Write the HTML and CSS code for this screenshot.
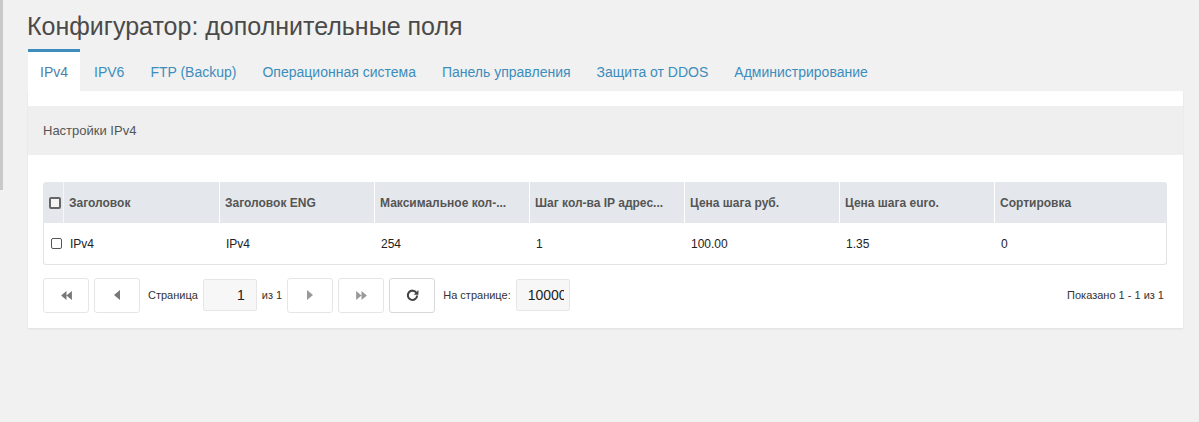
FILE: index.html
```html
<!DOCTYPE html>
<html lang="ru">
<head>
<meta charset="utf-8">
<title>Конфигуратор</title>
<link rel="stylesheet" href="styles.css">
</head>
<body>
<div class="layout">
  <div class="edge"></div>
  <main class="main">
    <h1 class="title">Конфигуратор: дополнительные поля</h1>
    <ul class="tabs">
      <li class="tab active">IPv4</li>
      <li class="tab">IPV6</li>
      <li class="tab">FTP (Backup)</li>
      <li class="tab">Операционная система</li>
      <li class="tab">Панель управления</li>
      <li class="tab">Защита от DDOS</li>
      <li class="tab">Администрирование</li>
    </ul>
    <section class="card">
      <div class="panel-head">Настройки IPv4</div>
      <div class="panel-body">
        <div class="grid">
          <div class="grid-row grid-head">
            <div class="cell cb"><span class="box box-head"></span></div>
            <div class="cell">Заголовок</div>
            <div class="cell">Заголовок ENG</div>
            <div class="cell">Максимальное кол-...</div>
            <div class="cell">Шаг кол-ва IP адрес...</div>
            <div class="cell">Цена шага руб.</div>
            <div class="cell">Цена шага euro.</div>
            <div class="cell last">Сортировка</div>
          </div>
          <div class="grid-row grid-body">
            <div class="cell cb"><span class="box"></span></div>
            <div class="cell">IPv4</div>
            <div class="cell">IPv4</div>
            <div class="cell">254</div>
            <div class="cell">1</div>
            <div class="cell">100.00</div>
            <div class="cell">1.35</div>
            <div class="cell last">0</div>
          </div>
        </div>
        <div class="pager">
          <button class="pbtn" aria-label="Первая">
            <svg width="11" height="9" viewBox="0 0 12 10"><path d="M6 0v10L0 5z M12 0v10L6 5z" fill="#777"/></svg>
          </button>
          <button class="pbtn" aria-label="Назад">
            <svg width="6" height="10" viewBox="0 0 6 10"><path d="M6 0v10L0 5z" fill="#777"/></svg>
          </button>
          <span class="plabel">Страница</span>
          <span class="pinput page-num">1</span>
          <span class="plabel of">из 1</span>
          <button class="pbtn" aria-label="Вперёд">
            <svg width="6" height="10" viewBox="0 0 6 10"><path d="M0 0v10L6 5z" fill="#999"/></svg>
          </button>
          <button class="pbtn" aria-label="Последняя">
            <svg width="11" height="9" viewBox="0 0 12 10"><path d="M0 0v10L6 5z M6 0v10L12 5z" fill="#999"/></svg>
          </button>
          <button class="pbtn refresh" aria-label="Обновить">
            <svg width="13" height="13" viewBox="0 0 14 14"><path d="M11.3 4.2A5 5 0 1 0 12 7" fill="none" stroke="#444" stroke-width="2.2"/><path d="M13.4 1.2v5h-5z" fill="#444"/></svg>
          </button>
          <span class="plabel per">На странице:</span>
          <span class="pinput per-num"><span class="clip">10000</span></span>
          <span class="shown">Показано 1 - 1 из 1</span>
        </div>
      </div>
    </section>
  </main>
</div>
</body>
</html>
```
FILE: styles.css
```css
* { box-sizing: border-box; }
html, body { margin: 0; padding: 0; }
body {
  background: #f1f1f1;
  font-family: "Liberation Sans", Arial, sans-serif;
  color: #333;
  width: 1199px;
  height: 422px;
  overflow: hidden;
}
.layout { display: flex; align-items: flex-start; }
.edge { width: 3px; height: 190px; background: #c9c9c9; flex: none; }
.main { margin-left: 25px; width: 1155px; }
.title {
  margin: 11px 0 0 -1px;
  font-size: 25px;
  font-weight: normal;
  line-height: 31px;
  color: #4a4a4a;
}
.tabs {
  list-style: none;
  margin: 7px 0 0 0;
  padding: 0;
  display: flex;
  gap: 2px;
}
.tab {
  font-size: 14px;
  color: #3c8dbc;
  padding: 12px 12px 0 12px;
  height: 42px;
  border-top: 3px solid transparent;
}
.tab.active {
  background: #fff;
  border-top-color: #3c8dbc;
  color: #4f7fa8;
}
.card {
  background: #fff;
  padding-top: 15px;
  padding-bottom: 15px;
  box-shadow: 0 1px 2px rgba(0,0,0,0.08);
}
.panel-head {
  background: #efefef;
  height: 49px;
  padding: 17px 15px 0 15px;
  font-size: 13px;
  color: #555;
}
.panel-body { padding: 27px 15px 0 15px; }
.grid { width: 1124px; }
.grid-row {
  display: grid;
  grid-template-columns: 21px 156px repeat(5, 155px) 1fr;
}
.grid-head {
  background: #e4e8ec;
  height: 41px;
  border-radius: 3px 3px 0 0;
  font-size: 12px;
  font-weight: bold;
  color: #555;
}
.grid-head .cell { border-right: 1px solid #fff; }
.grid-head .cell.cb { border-right: 1px solid #f4f6f8; }
.grid-head .cell.last { border-right: 0; }
.cell {
  display: flex;
  align-items: center;
  padding-left: 5px;
  white-space: nowrap;
  overflow: hidden;
}
.grid-head .cell.cb { padding-left: 6px; }
.grid-body {
  height: 42px;
  border: 1px solid #e3e3e3;
  border-top: 0;
  border-radius: 0 0 3px 3px;
  font-size: 12px;
  color: #222;
}
.grid-body .cell { padding-left: 5px; }
.grid-body .cell:first-child { padding-left: 7px; }
.box {
  width: 11px;
  height: 11px;
  border: 1px solid #555;
  border-radius: 2px;
  background: #fff;
  display: block;
}
.box-head { width: 12px; height: 12px; border: 2px solid #666; border-radius: 2px; background: #f4f4f4; }
.pager {
  display: flex;
  align-items: center;
  margin-top: 12px;
  height: 36px;
  font-size: 11px;
  color: #333;
}
.pbtn {
  width: 46px;
  height: 35px;
  background: #fff;
  border: 1px solid #e6e6e6;
  border-radius: 3px;
  display: flex;
  align-items: center;
  justify-content: center;
  padding: 0;
  margin-right: 5px;
}
.pbtn.refresh { border-color: #d8d8d8; margin-right: 8px; }
.plabel { margin: 0 5px 0 3px; }
.plabel.of { margin: 0 5px 0 5px; }
.plabel.per { margin: 0 5px 0 0; }
.pinput {
  height: 32px;
  background: #f7f7f7;
  border: 1px solid #e6e6e6;
  border-radius: 2px;
  display: flex;
  align-items: center;
  font-size: 14px;
  color: #222;
}
.page-num { width: 54px; justify-content: flex-end; padding-right: 11px; }
.per-num { width: 54px; padding-left: 11px; }
.clip { display: block; width: 36px; overflow: hidden; white-space: nowrap; }
.shown { margin-left: auto; margin-right: 4px; font-size: 11px; }
```
